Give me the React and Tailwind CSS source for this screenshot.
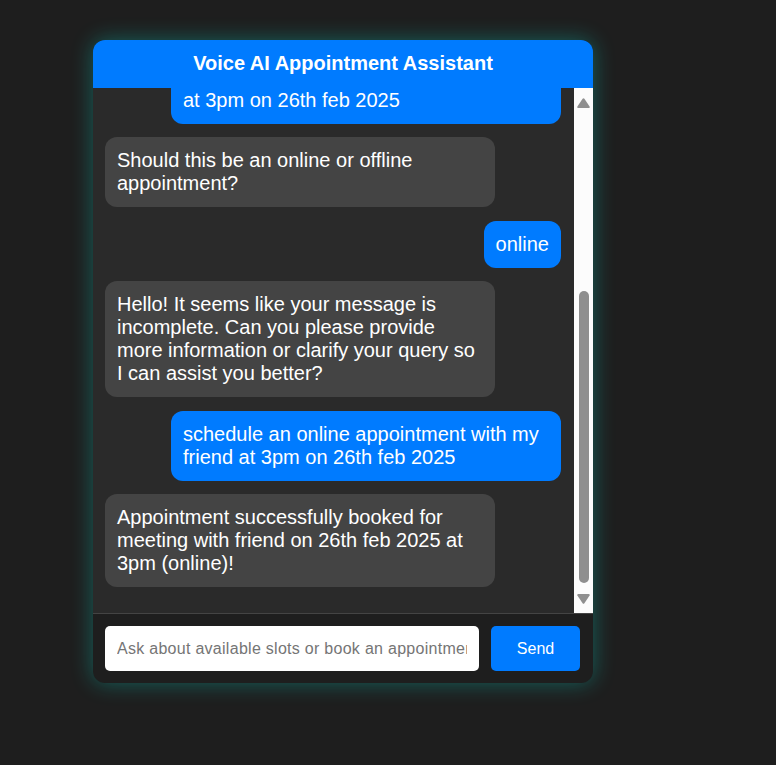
import { useState } from 'react';

const initialMessages = [
  { from: 'user', text: 'schedule an appointment with my friend at 3pm on 26th feb 2025' },
  { from: 'bot', text: 'Should this be an online or offline appointment?' },
  { from: 'user', text: 'online' },
  {
    from: 'bot',
    text: 'Hello! It seems like your message is incomplete. Can you please provide more information or clarify your query so I can assist you better?',
  },
  { from: 'user', text: 'schedule an online appointment with my friend at 3pm on 26th feb 2025' },
  { from: 'bot', text: 'Appointment successfully booked for meeting with friend on 26th feb 2025 at 3pm (online)!' },
];

const Arrow = ({ down }) => (
  <svg width="13" height="10" viewBox="0 0 13 10" className={down ? 'rotate-180' : ''}>
    <path d="M5.6 0.8 Q6.5 -0.2 7.4 0.8 L12.6 8.6 Q13 10 11.6 10 L1.4 10 Q0 10 0.4 8.6 Z" fill="#8f8f8f" />
  </svg>
);

// fake scrollbar, message list is pinned to the bottom
const ScrollTrack = () => (
  <div className="w-[19px] shrink-0 bg-[#fcfcfc] flex flex-col items-center pt-[10px] pb-[9px]">
    <Arrow />
    <div className="flex-1" />
    <div className="w-[10px] h-[292px] rounded-full bg-[#8f8f8f]" />
    <div className="mt-[11px]">
      <Arrow down />
    </div>
  </div>
);

const Bubble = ({ from, text }) => {
  const isUser = from === 'user';
  return (
    <div
      className={`max-w-[390px] p-3 rounded-xl text-[20px] leading-[23px] text-white shrink-0 ${
        isUser ? 'self-end bg-[#007bff]' : 'self-start bg-[#444444]'
      }`}
    >
      {text}
    </div>
  );
};

export default function App() {
  const [messages] = useState(initialMessages);
  const [input, setInput] = useState('');

  return (
    <div
      className="min-h-screen bg-[#1e1e1e] pt-10 pl-[93px]"
      style={{ fontFamily: '"Liberation Sans", Arial, sans-serif' }}
    >
      <div className="w-[500px] rounded-xl overflow-hidden bg-[#1e1e1e] shadow-[0_0_22px_rgba(0,255,240,0.3)] flex flex-col">
        <div className="h-12 bg-[#007bff] flex items-center justify-center text-white text-[20px] font-bold leading-[23px] pb-px">
          Voice AI Appointment Assistant
        </div>

        <div className="h-[525px] bg-[#2a2a2a] flex">
          <div className="flex-1 flex flex-col justify-end overflow-hidden pl-3 pr-[13px] pb-[26px] gap-[13.5px]">
            {messages.map((m, i) => (
              <Bubble key={i} from={m.from} text={m.text} />
            ))}
          </div>
          <ScrollTrack />
        </div>

        <div className="border-t border-[#444444] px-3 pt-3 pb-3 pr-[13px] flex gap-3">
          <input
            value={input}
            onChange={(e) => setInput(e.target.value)}
            placeholder="Ask about available slots or book an appointment"
            className="flex-1 min-w-0 h-[45px] bg-white rounded-[5px] px-3 text-[16px] tracking-[0.28px] text-black placeholder:text-[#757575] outline-none"
          />
          <button className="w-[89px] h-[45px] bg-[#007bff] rounded-[5px] text-white text-[16px]">
            Send
          </button>
        </div>
      </div>
    </div>
  );
}
